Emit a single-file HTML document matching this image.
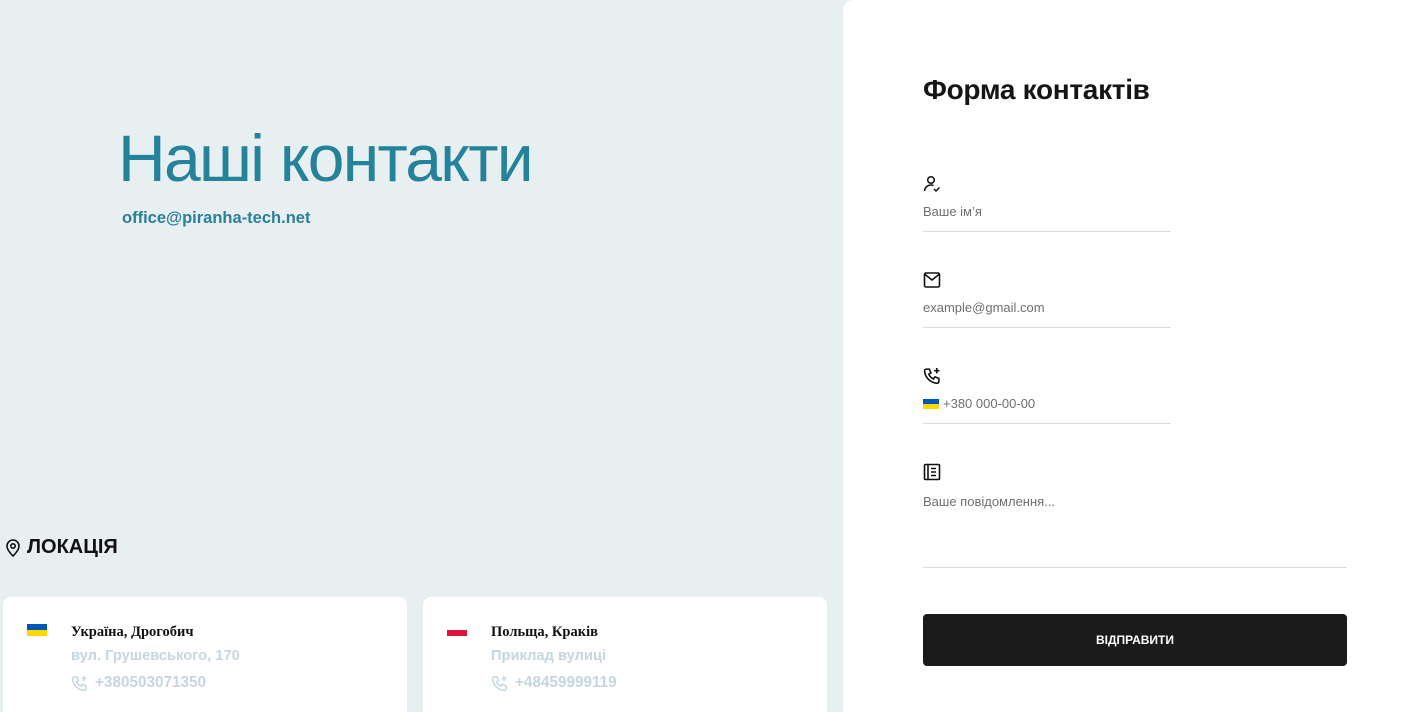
<!DOCTYPE html>
<html><head><meta charset="utf-8"><style>
*{margin:0;padding:0;box-sizing:border-box}
html,body{width:1423px;height:712px;overflow:hidden}
body{background:#e8eff1;font-family:"Liberation Sans",sans-serif;position:relative}
.abs{position:absolute}
h1{position:absolute;left:118px;top:120px;font-size:66px;font-weight:400;color:#24829a;letter-spacing:-1.7px;white-space:nowrap}
.email{left:122px;top:209px;font-size:16.5px;font-weight:bold;color:#2a7f99}
.loc{left:5px;top:536px;font-size:20px;font-weight:bold;color:#111;display:flex;align-items:center;gap:6px}
.card{background:#fff;border-radius:8px;top:597px;width:404px;height:115px;border-bottom-left-radius:0;border-bottom-right-radius:0}
.card .flag{position:absolute;left:24px;top:27px;width:20px;height:12px}
.card .t{position:absolute;left:68px;top:27px;font-size:14.5px;font-weight:bold;color:#111;font-family:"Liberation Serif",serif}
.card .a{position:absolute;left:68px;top:51px;font-size:14.7px;font-weight:bold;color:#c4d7e0}
.card .p{position:absolute;left:68px;top:77px;font-size:15.3px;font-weight:bold;color:#c4d7e0;display:flex;align-items:center;gap:7px}
.panel{left:843px;top:0;width:580px;height:712px;background:#fff;border-top-left-radius:10px}
.ft{left:923px;top:74px;font-size:28px;font-weight:bold;color:#151515;letter-spacing:-0.3px}
.ic{position:absolute;left:923px}
.ph{position:absolute;left:923px;font-size:13px;color:#6f6f6f}
.ln{position:absolute;left:923px;width:248px;height:1px;background:#dcdcdc}
.btn{left:923px;top:614px;width:424px;height:52px;background:#1a1b1a;border-radius:4px;color:#fff;font-size:12px;font-weight:bold;display:flex;align-items:center;justify-content:center}
</style></head><body>
<h1>Наші контакти</h1>
<div class="abs email">office@piranha-tech.net</div>
<div class="abs loc"><svg width="16" height="18" viewBox="0 0 16 18" fill="none" stroke="#111" stroke-width="1.6"><path d="M8 17s6-5.5 6-10A6 6 0 0 0 2 7c0 4.5 6 10 6 10z"/><circle cx="8" cy="7" r="2.2"/></svg>ЛОКАЦІЯ</div>
<div class="abs card" style="left:3px">
<div class="flag"><div style="height:6px;background:#0057b7"></div><div style="height:6px;background:#ffd700"></div></div>
<div class="t">Україна, Дрогобич</div><div class="a">вул. Грушевського, 170</div>
<div class="p"><svg width="17" height="17" viewBox="0 0 17 17" fill="none" stroke="#c4d7e0" stroke-width="1.5"><path d="M3 2h3l1.5 3.5-2 1.3a8 8 0 0 0 4.5 4.5l1.3-2L15 10.8v3a1.5 1.5 0 0 1-1.6 1.5A12.5 12.5 0 0 1 1.5 3.6 1.5 1.5 0 0 1 3 2z"/><path d="M13 1v5M10.5 3.5h5"/></svg>+380503071350</div></div>
<div class="abs card" style="left:423px">
<div class="flag"><div style="height:6px;background:#fff"></div><div style="height:6px;background:#dc143c"></div></div>
<div class="t">Польща, Краків</div><div class="a">Приклад вулиці</div>
<div class="p"><svg width="17" height="17" viewBox="0 0 17 17" fill="none" stroke="#c4d7e0" stroke-width="1.5"><path d="M3 2h3l1.5 3.5-2 1.3a8 8 0 0 0 4.5 4.5l1.3-2L15 10.8v3a1.5 1.5 0 0 1-1.6 1.5A12.5 12.5 0 0 1 1.5 3.6 1.5 1.5 0 0 1 3 2z"/><path d="M13 1v5M10.5 3.5h5"/></svg>+48459999119</div></div>
<div class="abs panel"></div>
<div class="abs ft">Форма контактів</div>
<svg class="ic" style="top:175px" width="18" height="18" viewBox="0 0 18 18" fill="none" stroke="#111" stroke-width="1.5"><circle cx="8" cy="5" r="3.3"/><path d="M1.5 16a6.5 6.5 0 0 1 9-5.5M11 14l2 2 3.5-3.5"/></svg>
<div class="ph" style="top:204px">Ваше ім’я</div><div class="ln" style="top:231px"></div>
<svg class="ic" style="top:271px" width="18" height="18" viewBox="0 0 18 18" fill="none" stroke="#111" stroke-width="1.6"><rect x="1.5" y="2" width="15" height="14" rx="1.5"/><path d="M1.5 3l7.5 6 7.5-6"/></svg>
<div class="ph" style="top:300px">example@gmail.com</div><div class="ln" style="top:327px"></div>
<svg class="ic" style="top:367px" width="18" height="18" viewBox="0 0 17 17" fill="none" stroke="#111" stroke-width="1.5"><path d="M3 2h3l1.5 3.5-2 1.3a8 8 0 0 0 4.5 4.5l1.3-2L15 10.8v3a1.5 1.5 0 0 1-1.6 1.5A12.5 12.5 0 0 1 1.5 3.6 1.5 1.5 0 0 1 3 2z"/><path d="M13 1v5M10.5 3.5h5"/></svg>
<div class="abs" style="left:923px;top:399px;width:16px;height:10px"><div style="height:5px;background:#0057b7"></div><div style="height:5px;background:#ffd700"></div></div>
<div class="ph" style="top:396px;left:943px">+380 000-00-00</div><div class="ln" style="top:423px"></div>
<svg class="ic" style="top:463px" width="18" height="18" viewBox="0 0 18 18" fill="none" stroke="#111" stroke-width="1.6"><rect x="1.5" y="1.5" width="15" height="15" rx="1"/><path d="M5 2v14M8 5.5h5M8 9h5M8 12.5h5"/></svg>
<div class="ph" style="top:494px">Ваше повідомлення...</div>
<div class="ln" style="top:567px;width:424px"></div>
<div class="abs btn">ВІДПРАВИТИ</div>
</body></html>
